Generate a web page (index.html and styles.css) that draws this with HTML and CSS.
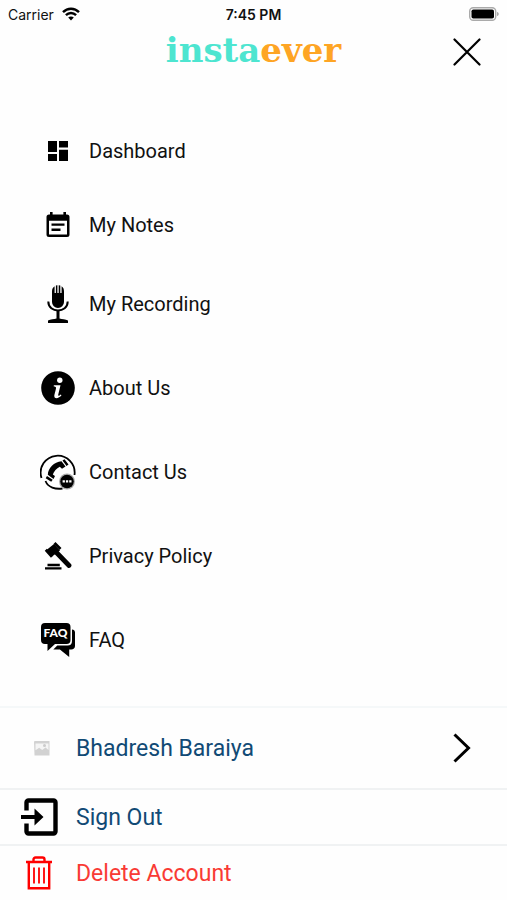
FILE: index.html
```html
<!DOCTYPE html>
<html lang="en">
<head>
    <meta charset="UTF-8">
    <meta name="viewport" content="width=device-width, initial-scale=1.0">
    <title>instaever</title>
    <link rel="stylesheet" href="styles.css">
</head>
<body>
    <div class="status-bar">
        <div class="carrier">
            <span>Carrier</span>
            <svg width="18" height="14" viewBox="0 0 18 14" fill="none" stroke="#000" stroke-width="2.4">
                <path d="M1 5.2C5.5.6 12.5.6 17 5.2"/>
                <path d="M3.9 8.2c2.9-2.9 7.3-2.9 10.2 0"/>
                <path d="M6.2 10.6c1.6-1.6 4-1.6 5.6 0L9 13.6z" fill="#000" stroke="none"/>
            </svg>
        </div>
        <span class="clock">7:45 PM</span>
        <div class="battery">
            <svg width="30" height="14" viewBox="0 0 30 14">
                <rect x=".7" y=".7" width="26" height="12.6" rx="3.5" fill="#fff" stroke="#aaa" stroke-width="1.4"/>
                <rect x="2.5" y="2.5" width="22.5" height="9" rx="1.8"/>
                <path d="M28 5c2.4.7 2.4 3.3 0 4z" fill="#aaa"/>
            </svg>
        </div>
    </div>

    <header class="header">
        <h1 class="logo">insta<span class="logo-accent">ever</span></h1>
        <button class="close-btn" type="button" aria-label="Close">
            <svg width="28" height="28" viewBox="0 0 28 28" fill="none" stroke="#000" stroke-width="2.2" stroke-linecap="round">
                <path d="M1.5 1.5l25 25M26.5 1.5l-25 25"/>
            </svg>
        </button>
    </header>

    <nav class="menu">
        <a class="menu-item compact" href="#dashboard">
            <span class="menu-icon">
                <svg width="20" height="20" viewBox="0 0 20 20">
                    <path d="M0 0h9v11H0zM11 0h9v6.5h-9zM0 13h9v7H0zM11 8.7h9V20h-9z"/>
                </svg>
            </span>
            Dashboard
        </a>
        <a class="menu-item compact" href="#notes">
            <span class="menu-icon">
                <svg width="24" height="26" viewBox="0 0 24 26">
                    <path fill-rule="evenodd" d="M4 0h2.6v2.5h10.8V0H20v2.5h1a2.5 2.5 0 0 1 2.5 2.5v17.5A2.5 2.5 0 0 1 21 25H3a2.5 2.5 0 0 1-2.5-2.5V5A2.5 2.5 0 0 1 3 2.5h1zM3 8.7v13.8h18V8.7z"/>
                    <path d="M5.5 11.5h13v2.3h-13zM5.5 16.6h9v2.3h-9z"/>
                </svg>
            </span>
            My Notes
        </a>
        <a class="menu-item" href="#recording">
            <span class="menu-icon">
                <svg width="22" height="38" viewBox="0 0 22 38">
                    <path d="M5 6.5C5 4 6 2.3 7.6 1.3V8h1.3V.6Q10 0 10.4.2V8h1.3V.2q1 0 1.6.4V8h1.3V1.3C16.2 2.3 17 4 17 6.5V17a6 6 0 0 1-12 0z"/>
                    <path d="M1.3 16.5c0 12 19.4 12 19.4 0" fill="none" stroke="#000" stroke-width="2"/>
                    <path d="M9.5 25h3v8.5c2.5.9 6 .8 8.500 1.900V38H1v-2.600c2.500-1.100 6-1 8.500-1.900z"/>
                </svg>
            </span>
            My Recording
        </a>
        <a class="menu-item" href="#about">
            <span class="menu-icon">
                <svg width="34" height="34" viewBox="0 0 34 34">
                    <circle cx="17" cy="17" r="16.8"/>
                    <circle cx="18.8" cy="9.3" r="2.7" fill="#fff"/>
                    <path d="M12.800 14.200h6.700l-2.300 9.500c-.3 1.300.8 1.500 2.500-.3l.8.900c-2.300 3-7.200 4.200-7.200.7 0-1.300 1.500-6 1.700-7.800.1-1.200-.6-1.500-2.200-1.600z" fill="#fff"/>
                </svg>
            </span>
            About Us
        </a>
        <a class="menu-item" href="#contact">
            <span class="menu-icon">
                <svg width="36" height="36" viewBox="0 0 36 36">
                    <path d="M1.5 24A17 17 0 1 1 34.5 21" fill="none" stroke="#000" stroke-width="1.8"/>
                    <path d="M5.5 27c2.500 6.500 10 8.500 17 7.500" fill="none" stroke="#000" stroke-width="1.800"/>
                    <path d="M7.800 20.800C8 14 14 7.800 21.500 7.200l4 5.300-3.500 2.300-2.200-2c-3.300 1.700-5.800 4.500-7 7.700l2.200 1.500-1.500 3z"/>
                    <path d="M22.500 6.500l2-1.300 4 5.200-2 1.500zM7 22l5.700 3.700-1.500 2-5.500-3.500z"/>
                    <circle cx="27" cy="27.500" r="8" fill="#aaa"/>
                    <circle cx="27" cy="27.500" r="6.800"/>
                    <path d="M22.600 26.200h2.300v2.300h-2.300zM25.900 26.200h2.300v2.300h-2.300zM29.200 26.200h2.300v2.300h-2.300z" fill="#fff"/>
                </svg>
            </span>
            Contact Us
        </a>
        <a class="menu-item" href="#privacy">
            <span class="menu-icon">
                <svg width="28" height="28" viewBox="0 0 28 28">
                    <path d="M10 2l6 6.500-8 6-5.500-6.500z"/>
                    <path d="M10.500 1l6 6M1.800 7.800l6.200 7" fill="none" stroke="#000" stroke-width="2.800"/>
                    <path d="M11.500 9.500l13.500 14" fill="none" stroke="#000" stroke-width="4.800" stroke-linecap="round"/>
                    <path d="M3.500 21.800h12.300v2.400H3.500zM1 25.200h16.500v2.400H1z"/>
                </svg>
            </span>
            Privacy Policy
        </a>
        <a class="menu-item" href="#faq">
            <span class="menu-icon">
                <svg width="34" height="34" viewBox="0 0 34 34">
                    <path d="M31 6.500a3.300 3.300 0 0 1 3 3.500v13c0 2.200-1.600 3.500-3.700 3.500h-2.100V34l-9.300-7.500h-6.600l4-4h10.200c3 0 4.500-1.500 4.500-4.500z"/>
                    <path d="M4 0h21.500a4 4 0 0 1 4 4v13a4 4 0 0 1-4 4H14l-7.500 7v-7H4a4 4 0 0 1-4-4V4a4 4 0 0 1 4-4z"/>
                    <text class="faq-label" x="14.500" y="14" text-anchor="middle">FAQ</text>
                </svg>
            </span>
            FAQ
        </a>
    </nav>

    <footer class="account">
        <a class="account-item profile" href="#profile">
            <span class="account-icon">
                <svg class="avatar" width="16" height="16" viewBox="0 0 16 16">
                    <path d="M0 1.500l1-.5h14.500v14.500H.5z" fill="#d2d2d2"/>
                    <path d="M1.500 3.500h13V10l-3-2.500-3.300 2.600-3-2.300-3.700 2.500z" fill="#f5f5f5"/>
                    <circle cx="10.500" cy="5.500" r="1.500" fill="#ccc"/>
                </svg>
            </span>
            <span class="account-name">Bhadresh Baraiya</span>
            <svg class="chevron" width="18" height="30" viewBox="0 0 18 30" fill="none" stroke="#000" stroke-width="3">
                <path d="M1.500 1.500L15.500 15l-14 13.500"/>
            </svg>
        </a>
        <button class="account-item" type="button">
            <span class="account-icon">
                <svg width="38" height="38" viewBox="0 0 38 38">
                    <path d="M6.500 12.500V4.500a2 2 0 0 1 2-2h25a2 2 0 0 1 2 2v29a2 2 0 0 1-2 2h-25a2 2 0 0 1-2-2V25.500" fill="none" stroke="#000" stroke-width="4.400"/>
                    <path d="M1 17h13.500v-6.500L23.500 19l-9 8.500V21H1z"/>
                </svg>
            </span>
            Sign Out
        </button>
        <button class="account-item danger" type="button">
            <span class="account-icon">
                <svg width="28" height="34" viewBox="0 0 28 34" fill="none" stroke="#f00" stroke-width="2.400">
                    <path d="M1 6h26M8.500 5.500V3.500a2 2 0 0 1 2-2h7a2 2 0 0 1 2 2v2M3.800 6.500V32.300h20.400V6.500"/>
                    <path d="M9 11.500v16M14 11.500v16M19 11.500v16" stroke-width="1.800"/>
                </svg>
            </span>
            Delete Account
        </button>
    </footer>
</body>
</html>
```
FILE: styles.css
```css
* {
    margin: 0;
    padding: 0;
    box-sizing: border-box;
}

body {
    font-family: Roboto, 'Liberation Sans', sans-serif;
    background: #fefefe;
    color: #111;
    min-height: 100vh;
    display: flex;
    flex-direction: column;
}

svg {
    display: block;
}

.status-bar {
    display: grid;
    grid-template-columns: 1fr auto 1fr;
    align-items: center;
    height: 28px;
    padding: 0 8px;
    font-family: Inter, sans-serif;
    font-size: 14px;
}

.carrier {
    display: flex;
    align-items: center;
    gap: 8px;
}

.clock {
    font-weight: 600;
}

.battery {
    justify-self: end;
}

.header {
    display: grid;
    grid-template-columns: 1fr auto 1fr;
    align-items: center;
    height: 48px;
    padding: 0 24px;
}

.logo {
    grid-column: 2;
    font-family: 'DejaVu Serif', serif;
    font-size: 34px;
    font-weight: 700;
    line-height: 44px;
    padding-bottom: 4px;
    color: #4de5d0;
}

.logo-accent {
    color: #fea524;
}

.close-btn {
    justify-self: end;
    padding: 2px;
    background: none;
    border: none;
    cursor: pointer;
}

.menu {
    display: flex;
    flex-direction: column;
    padding: 38px 40px 16px;
}

.menu-item {
    display: flex;
    align-items: center;
    gap: 13px;
    height: 84px;
    font-size: 20px;
    color: #111;
    text-decoration: none;
}

.menu-item.compact {
    height: 74px;
}

.menu-icon {
    display: flex;
    justify-content: center;
    width: 36px;
}

.faq-label {
    font-family: Lato, sans-serif;
    font-size: 12px;
    font-weight: 900;
    fill: #fff;
}

.account {
    margin-top: auto;
}

.account-item {
    display: flex;
    align-items: center;
    gap: 18px;
    width: 100%;
    height: 56px;
    padding: 0 36px 0 20px;
    background: #fefefe;
    border: none;
    border-top: 2px solid #f0f2f3;
    font-family: inherit;
    font-size: 23px;
    color: #114a75;
    text-align: left;
    text-decoration: none;
    cursor: pointer;
}

.account-item.profile {
    height: 82px;
    border-top-color: #f5f8f9;
}

.account-item.danger {
    color: #f93a34;
}

.account-icon {
    display: flex;
    justify-content: center;
    width: 38px;
}

.avatar {
    margin-left: 6px;
}

.account-name {
    flex: 1;
}
```
